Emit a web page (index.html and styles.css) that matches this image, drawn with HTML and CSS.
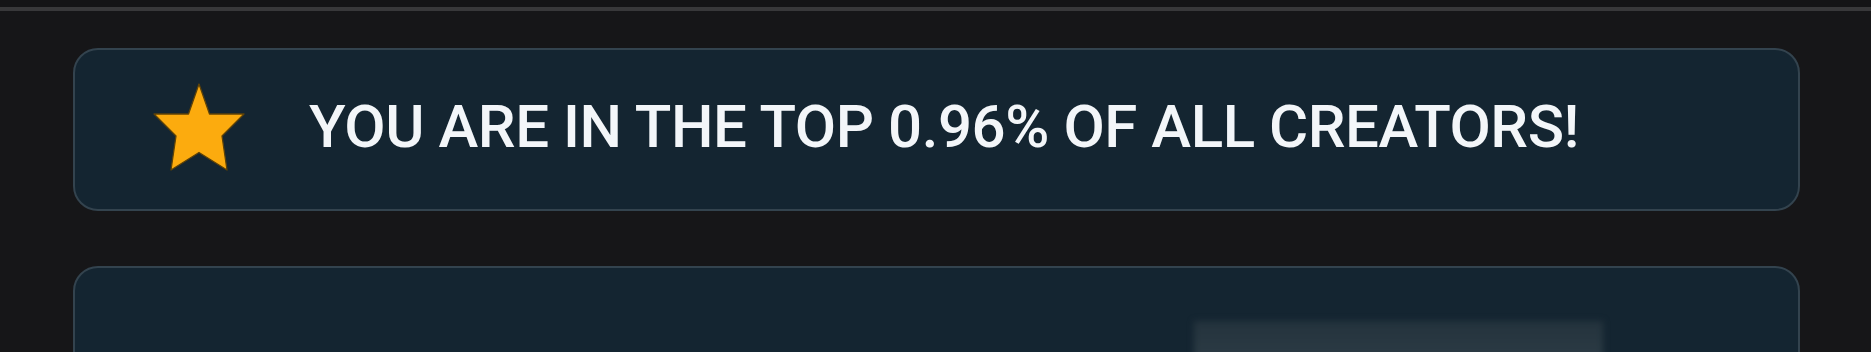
FILE: index.html
```html
<!DOCTYPE html>
<html>
<head>
<meta charset="utf-8">
<link rel="stylesheet" href="styles.css">
</head>
<body>
<div class="topbar"></div>
<main class="content">
  <section class="card rank">
    <svg class="star" viewBox="-1 -1 92 88" width="92" height="88" aria-hidden="true">
      <polygon points="45,0 55.5,30 90,30 68,52 73,86 45,68.5 17,86 22,52 0,30 34.5,30" fill="#fcab0e" stroke="#5e4207" stroke-width="1.3" stroke-linejoin="round"/>
    </svg>
    <h1 class="rank-text">YOU ARE IN THE TOP 0.96% OF ALL CREATORS!</h1>
  </section>
  <section class="card panel">
    <div class="blurred"></div>
  </section>
</main>
</body>
</html>
```
FILE: styles.css
```css
html, body {
  margin: 0;
  padding: 0;
  background: #161618;
  height: 352px;
  overflow: hidden;
}
.topbar {
  height: 7px;
  background: #141416;
  border-bottom: 4px solid #38383a;
}
.content {
  display: flex;
  flex-direction: column;
  gap: 55px;
  padding: 37px 71px 0 73px;
}
.card {
  box-sizing: border-box;
  background: #142531;
  border: 2px solid #33434e;
  border-radius: 25px;
}
.rank {
  height: 163px;
  display: flex;
  align-items: center;
  padding: 0 0 6px 78px;
  gap: 64px;
}
.star {
  display: block;
  flex: none;
}
.rank-text {
  margin: 0;
  font-family: Roboto, "Liberation Sans", sans-serif;
  font-weight: 500;
  font-size: 60px;
  line-height: 1;
  color: #f3f6f9;
  letter-spacing: -0.45px;
}
.panel {
  height: 200px;
  border-bottom-left-radius: 0;
  border-bottom-right-radius: 0;
  padding: 53px 0 0 1119px;
}
.blurred {
  width: 409px;
  height: 120px;
  background:
    radial-gradient(ellipse 60% 45% at 45% 80%, #51626a 0%, rgba(81,98,106,0) 100%),
    linear-gradient(180deg, #24333d 0%, #3d4c55 100%);
  filter: blur(3px);
}
```
